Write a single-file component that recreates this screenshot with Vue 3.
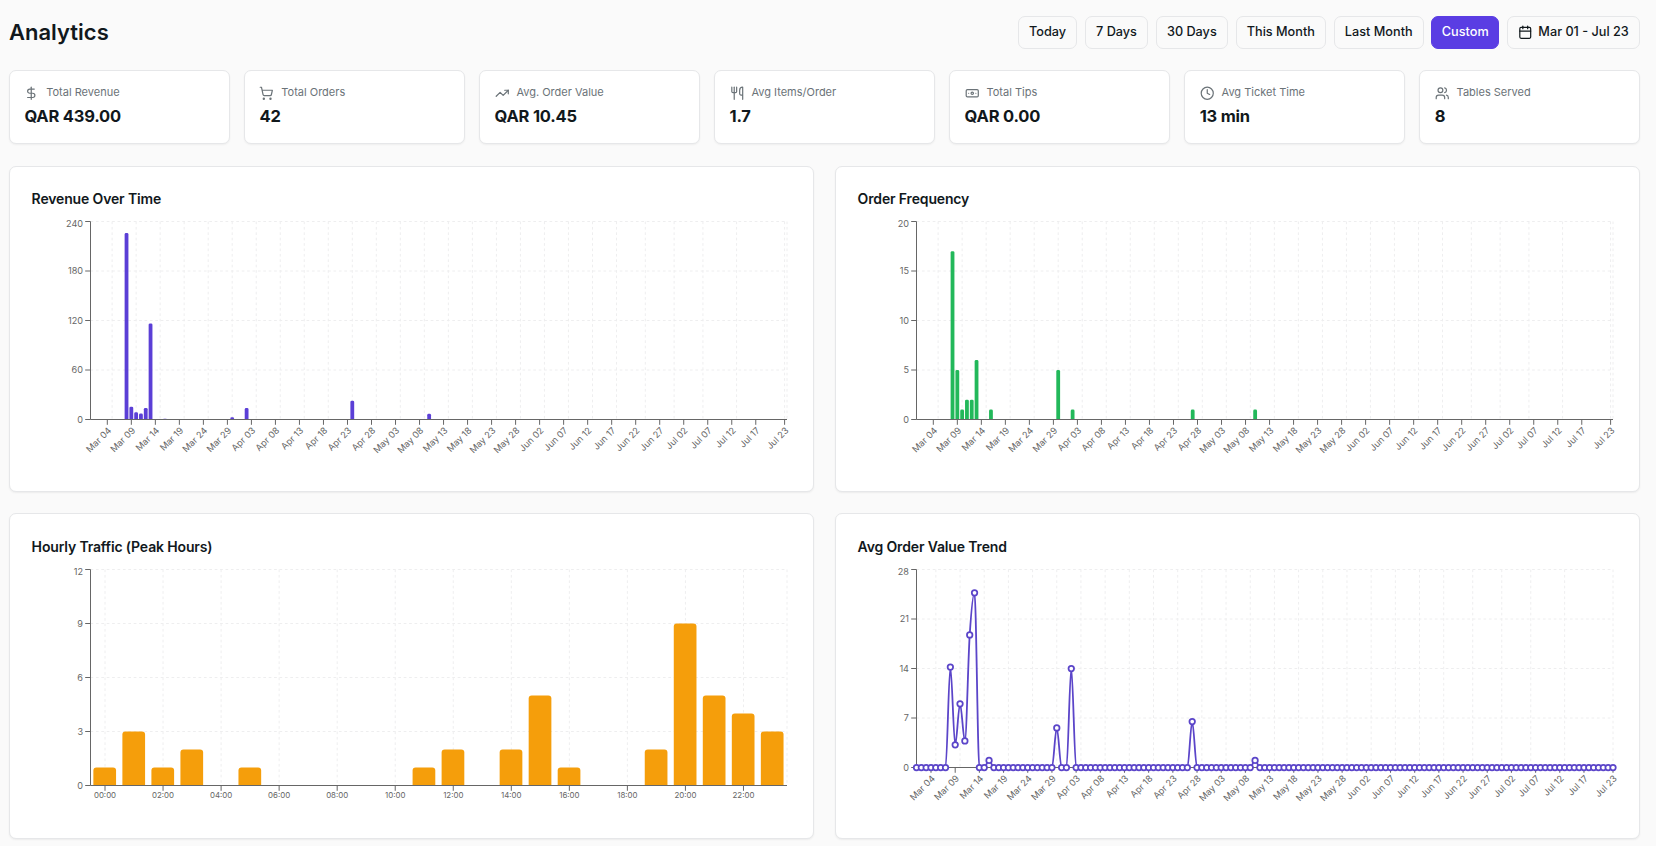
<template>
  <div class="analytics">
    <header class="page-header">
      <h1 class="page-title">Analytics</h1>
      <div class="range-bar">
        <button
          v-for="range in ranges"
          :key="range"
          type="button"
          class="range-btn"
          :class="{ 'range-btn--active': range === activeRange }"
          @click="activeRange = range"
        >{{ range }}</button>
        <button type="button" class="range-btn range-btn--date">
          <svg class="date-icon" viewBox="0 0 24 24">
            <path d="M8 2v4" />
            <path d="M16 2v4" />
            <rect width="18" height="18" x="3" y="4" rx="2" />
            <path d="M3 10h18" />
          </svg>
          <span>Mar 01 - Jul 23</span>
        </button>
      </div>
    </header>

    <!-- KPI cards -->
    <section class="kpi-grid">
      <div v-for="kpi in kpis" :key="kpi.label" class="kpi-card">
        <div class="kpi-head">
          <svg class="kpi-icon" viewBox="0 0 24 24">
            <path v-for="d in kpi.icon" :key="d" :d="d" />
          </svg>
          <span class="kpi-label">{{ kpi.label }}</span>
        </div>
        <div class="kpi-value">{{ kpi.value }}</div>
      </div>
    </section>

    <!-- Charts -->
    <section class="chart-grid">
      <div v-for="chart in charts" :key="chart.title" class="chart-card">
        <h2 class="chart-title">{{ chart.title }}</h2>
        <svg class="chart" width="761" height="254" viewBox="0 0 761 254">
          <g class="grid">
            <line v-for="t in chart.yTicks" :key="'h' + t.label" :x1="LEFT" :x2="RIGHT" :y1="t.y" :y2="t.y" />
            <line v-for="x in chart.gridX" :key="'v' + x" :x1="x" :x2="x" :y1="TOP" :y2="chart.bottom" />
          </g>

          <g v-if="chart.bars" :fill="chart.color">
            <path v-for="bar in chart.bars" :key="bar" :d="bar" />
          </g>

          <g class="axis">
            <line :x1="LEFT" :x2="RIGHT" :y1="chart.bottom" :y2="chart.bottom" />
            <line :x1="LEFT" :x2="LEFT" :y1="TOP" :y2="chart.bottom" />
            <line v-for="t in chart.yTicks" :key="t.label" :x1="LEFT - TICK" :x2="LEFT" :y1="t.y" :y2="t.y" />
            <line v-for="t in chart.xTicks" :key="t.label" :x1="t.x" :x2="t.x" :y1="chart.bottom" :y2="chart.bottom + TICK" />
          </g>

          <g class="labels" text-anchor="end">
            <text v-for="t in chart.yTicks" :key="t.label" :x="LEFT - 7.5" :y="t.labelY" dy="0.355em">{{ t.label }}</text>
          </g>
          <g v-if="chart.hourly" class="labels labels--hour" text-anchor="middle">
            <text v-for="t in chart.xTicks" :key="t.label" :x="t.x" :y="chart.bottom + 7" dy="0.71em">{{ t.label }}</text>
          </g>
          <g v-else class="labels" text-anchor="end">
            <text
              v-for="t in chart.xTicks"
              :key="t.label"
              :x="t.x"
              :y="chart.bottom + 7"
              dy="0.71em"
              :transform="`rotate(-45 ${t.x} ${chart.bottom + 7})`"
            >{{ t.label }}</text>
          </g>

          <g v-if="chart.points" class="trend">
            <path :d="chart.line" />
            <circle v-for="p in chart.points" :key="p.x" :cx="p.x" :cy="p.y" r="2.75" />
          </g>
        </svg>
      </div>
    </section>
  </div>
</template>

<script setup>
import { ref } from 'vue'

const ranges = ['Today', '7 Days', '30 Days', 'This Month', 'Last Month', 'Custom']
const activeRange = ref('Custom')

const kpis = [
  {
    label: 'Total Revenue',
    value: 'QAR 439.00',
    icon: ['M12 2v20', 'M17 5H9.5a3.5 3.5 0 0 0 0 7h5a3.5 3.5 0 0 1 0 7H6'],
  },
  {
    label: 'Total Orders',
    value: '42',
    icon: [
      'M7 21a1 1 0 1 0 2 0a1 1 0 1 0-2 0',
      'M18 21a1 1 0 1 0 2 0a1 1 0 1 0-2 0',
      'M2.05 2.05h2l2.66 12.42a2 2 0 0 0 2 1.58h9.78a2 2 0 0 0 1.95-1.57l1.65-7.43H5.12',
    ],
  },
  {
    label: 'Avg. Order Value',
    value: 'QAR 10.45',
    icon: ['M22 7l-8.5 8.5-5-5L2 17', 'M16 7h6v6'],
  },
  {
    label: 'Avg Items/Order',
    value: '1.7',
    icon: [
      'M3 2v7c0 1.1.9 2 2 2h4a2 2 0 0 0 2-2V2',
      'M7 2v20',
      'M21 15V2a5 5 0 0 0-5 5v6c0 1.1.9 2 2 2h3Zm0 0v7',
    ],
  },
  {
    label: 'Total Tips',
    value: 'QAR 0.00',
    icon: [
      'M4 6h16a2 2 0 0 1 2 2v8a2 2 0 0 1-2 2H4a2 2 0 0 1-2-2V8a2 2 0 0 1 2-2Z',
      'M10 12a2 2 0 1 0 4 0a2 2 0 1 0-4 0',
      'M6 12h.01M18 12h.01',
    ],
  },
  {
    label: 'Avg Ticket Time',
    value: '13 min',
    icon: ['M2 12a10 10 0 1 0 20 0a10 10 0 1 0-20 0', 'M12 6v6l4 2'],
  },
  {
    label: 'Tables Served',
    value: '8',
    icon: [
      'M16 21v-2a4 4 0 0 0-4-4H6a4 4 0 0 0-4 4v2',
      'M5 7a4 4 0 1 0 8 0a4 4 0 1 0-8 0',
      'M22 21v-2a4 4 0 0 0-3-3.87',
      'M16 3.13a4 4 0 0 1 0 7.75',
    ],
  },
]

// Plot area inside each chart svg
const LEFT = 59.5
const RIGHT = 756
const TOP = 5.5
const TICK = 5.3
const DAYS = 145

const dayStep = (RIGHT - LEFT) / DAYS
const bandX = (i) => LEFT + (i + 0.5) * dayStep
const pointX = (i) => LEFT + (i * (RIGHT - LEFT)) / (DAYS - 1)

function dayLabel(i) {
  const d = new Date(Date.UTC(2025, 2, 1 + i))
  const month = d.toLocaleString('en-US', { month: 'short', timeZone: 'UTC' })
  return `${month} ${String(d.getUTCDate()).padStart(2, '0')}`
}

// Every fifth day is labelled, then the last one
const labelDays = []
for (let i = 3; i <= 138; i += 5) labelDays.push(i)
labelDays.push(DAYS - 1)

const gridDays = []
for (let i = 4; i <= 109; i += 5) gridDays.push(i)
gridDays.push(115, 121, 127, 134, DAYS - 1)

function makeYTicks(values, bottom) {
  const max = values[values.length - 1]
  return values.map((v) => {
    const y = bottom - (v / max) * (bottom - TOP)
    return { label: String(v), y, labelY: v === max ? y + 2.5 : y }
  })
}

function barPath(cx, width, value, max, bottom, radius) {
  const h = (value / max) * (bottom - TOP)
  const r = Math.min(radius, h)
  const x = cx - width / 2
  return `M${x} ${bottom}v${-(h - r)}q0 ${-r} ${r} ${-r}h${width - 2 * r}q${r} 0 ${r} ${r}v${h - r}z`
}

// Monotone cubic interpolation
function monotonePath(pts) {
  const n = pts.length
  const s = []
  for (let i = 0; i < n - 1; i++) s.push((pts[i + 1].y - pts[i].y) / (pts[i + 1].x - pts[i].x))
  const m = pts.map((_, i) => {
    if (i === 0 || i === n - 1) return 0
    const a = s[i - 1]
    const b = s[i]
    if (a * b <= 0) return 0
    return Math.sign(a) * 2 * Math.min(Math.abs(a), Math.abs(b), Math.abs(a + b) / 4)
  })
  let d = `M${pts[0].x} ${pts[0].y}`
  for (let i = 0; i < n - 1; i++) {
    const p = pts[i]
    const q = pts[i + 1]
    const h = (q.x - p.x) / 3
    d += `C${p.x + h} ${p.y + m[i] * h} ${q.x - h} ${q.y - m[i + 1] * h} ${q.x} ${q.y}`
  }
  return d
}

function dailyBars(title, color, ticks, data) {
  const bottom = 203.5
  const max = ticks[ticks.length - 1]
  return {
    title,
    color,
    bottom,
    yTicks: makeYTicks(ticks, bottom),
    xTicks: labelDays.map((i) => ({ x: bandX(i), label: dayLabel(i) })),
    gridX: [...gridDays.map(bandX), RIGHT],
    bars: Object.entries(data).map(([i, v]) => barPath(bandX(Number(i)), 3.8, v, max, bottom, 1.4)),
  }
}

function hourlyBars(title, data) {
  const bottom = 221.5
  const step = (RIGHT - LEFT) / 24
  const x = (h) => LEFT + (h + 0.5) * step
  const hours = Array.from({ length: 12 }, (_, i) => i * 2)
  return {
    title,
    color: '#f59e0b',
    hourly: true,
    bottom,
    yTicks: makeYTicks([0, 3, 6, 9, 12], bottom),
    xTicks: hours.map((h) => ({ x: x(h), label: `${String(h).padStart(2, '0')}:00` })),
    gridX: [...hours.map(x), RIGHT],
    bars: Object.entries(data).map(([h, v]) => barPath(x(Number(h)) - 0.3, 22.7, v, 12, bottom, 3)),
  }
}

function trendLine(title, data) {
  const bottom = 203.5
  const points = Array.from({ length: DAYS }, (_, i) => ({
    x: pointX(i),
    y: bottom - ((data[i] ?? 0) / 28) * (bottom - TOP),
  }))
  return {
    title,
    bottom,
    yTicks: makeYTicks([0, 7, 14, 21, 28], bottom),
    xTicks: labelDays.map((i) => ({ x: pointX(i), label: dayLabel(i) })),
    gridX: gridDays.map(pointX),
    points,
    line: monotonePath(points),
  }
}

const charts = [
  dailyBars('Revenue Over Time', '#5b3fd6', [0, 60, 120, 180, 240], {
    7: 226, 8: 15.5, 9: 8.8, 10: 7.2, 11: 14, 12: 116.5, 15: 0.9, 29: 2.6, 32: 13.8, 54: 22.8, 70: 7,
  }),
  dailyBars('Order Frequency', '#22b85a', [0, 5, 10, 15, 20], {
    7: 17, 8: 5, 9: 1, 10: 2, 11: 2, 12: 6, 15: 1, 29: 5, 32: 1, 57: 1, 70: 1,
  }),
  hourlyBars('Hourly Traffic (Peak Hours)', {
    0: 1, 1: 3, 2: 1, 3: 2, 5: 1, 11: 1, 12: 2, 14: 2, 15: 5, 16: 1, 19: 2, 20: 9, 21: 5, 22: 4, 23: 3,
  }),
  trendLine('Avg Order Value Trend', {
    7: 14.2, 8: 3.2, 9: 9, 10: 3.75, 11: 18.75, 12: 24.7, 15: 1, 29: 5.6, 32: 14, 57: 6.5, 70: 1,
  }),
]
</script>

<style>
body {
  background: #fafafa;
  overflow: hidden;
}
</style>

<style scoped>
.analytics {
  box-sizing: border-box;
  width: 1656px;
  height: 846px;
  padding: 16px 16px 0 9px;
  font-family: Inter, "Liberation Sans", sans-serif;
  color: #11181c;
  background: #fafafa;
}

.page-header {
  display: flex;
  align-items: center;
  justify-content: space-between;
  height: 33px;
}
.page-title {
  margin: 0;
  padding-bottom: 2px;
  font-size: 22px;
  line-height: 28px;
  font-weight: 600;
}

.range-bar {
  display: flex;
  gap: 7.6px;
}
.range-btn {
  display: flex;
  align-items: center;
  gap: 6px;
  box-sizing: border-box;
  height: 33px;
  padding: 0 10.2px 2px;
  border: 1px solid #e6e7e9;
  border-radius: 7px;
  background: #fafafa;
  color: #11181c;
  font: 500 12.7px Inter, sans-serif;
  white-space: nowrap;
}
.range-btn--active {
  padding: 0 9.4px 2px;
  border-color: #5a3de3;
  background: #5a3de3;
  color: #fff;
}
.date-icon {
  width: 14.5px;
  height: 14.5px;
  margin-top: 1px;
  fill: none;
  stroke: currentColor;
  stroke-width: 2;
  stroke-linecap: round;
  stroke-linejoin: round;
}

.kpi-grid {
  display: grid;
  grid-template-columns: repeat(7, 1fr);
  gap: 14.4px;
  margin-top: 21px;
}
.kpi-card {
  box-sizing: border-box;
  height: 74px;
  padding: 12px 14.4px;
  border: 1px solid #e6e7e9;
  border-radius: 7px;
  background: #fff;
  box-shadow: 0 1px 2px rgba(0, 0, 0, 0.05);
}
.kpi-head {
  display: flex;
  align-items: center;
  gap: 7.4px;
  height: 17px;
  color: #6b7378;
}
.kpi-icon {
  width: 14.5px;
  height: 14.5px;
  margin-top: 3px;
  fill: none;
  stroke: currentColor;
  stroke-width: 2;
  stroke-linecap: round;
  stroke-linejoin: round;
}
.kpi-label {
  font-size: 11px;
  line-height: 16px;
}
.kpi-value {
  margin-top: 4px;
  font-size: 16.5px;
  line-height: 24px;
  font-weight: 700;
  letter-spacing: -0.2px;
}

.chart-grid {
  display: grid;
  grid-template-columns: repeat(2, 1fr);
  gap: 21.9px 21px;
  margin-top: 22px;
}
.chart-card {
  box-sizing: border-box;
  height: 325.5px;
  padding: 21.2px 21px 0;
  border: 1px solid #e6e7e9;
  border-radius: 7px;
  background: #fff;
  box-shadow: 0 1px 2px rgba(0, 0, 0, 0.06);
}
.chart-title {
  margin: 0 0 7.2px;
  padding-left: 0.6px;
  font-size: 14px;
  line-height: 21px;
  font-weight: 600;
  letter-spacing: -0.15px;
}
.chart {
  display: block;
}

.grid line {
  stroke: #eeeeef;
  stroke-width: 1;
  stroke-dasharray: 2.7 2.7;
}
.axis line {
  stroke: #666;
  stroke-width: 1;
}
.labels {
  fill: #666;
  font-size: 9.1px;
}
.labels--hour {
  font-size: 7.9px;
}
.trend path {
  fill: none;
  stroke: #5b45c9;
  stroke-width: 1.8;
}
.trend circle {
  fill: #fff;
  stroke: #5b45c9;
  stroke-width: 1.75;
}
</style>
